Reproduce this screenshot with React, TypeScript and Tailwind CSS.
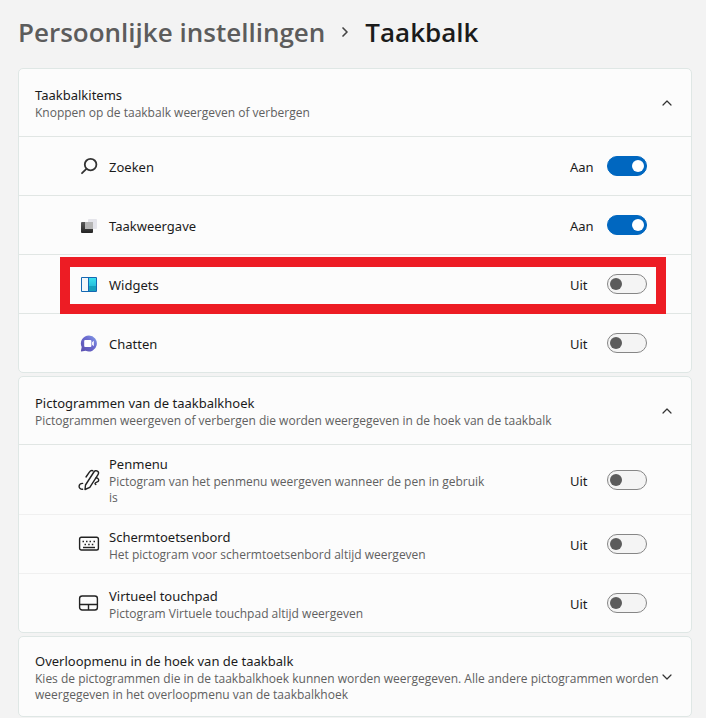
import { useState } from 'react';
import type { ReactNode } from 'react';
import { ChevronDown, ChevronRight, ChevronUp } from 'lucide-react';

type Item = {
  id: string;
  title: string;
  description?: string;
  icon: ReactNode;
  on?: boolean;
  highlighted?: boolean;
};

function SearchIcon() {
  return (
    <svg width="20" height="20" viewBox="0 -1 20 20" fill="none" stroke="#333" strokeWidth="1.8" strokeLinecap="round">
      <circle cx="11.6" cy="7.6" r="5.8" />
      <path d="M7.4 11.9 L3 16.2" />
    </svg>
  );
}

function TaskViewIcon() {
  return (
    <svg width="20" height="20" viewBox="0 -1 20 20">
      <defs>
        <linearGradient id="tv-dark" x1="0" y1="0" x2="0" y2="1">
          <stop offset="0" stopColor="#5a5a5a" />
          <stop offset="1" stopColor="#242424" />
        </linearGradient>
      </defs>
      <rect x="9" y="3" width="9" height="10" rx="1" fill="#e4e4ea" />
      <rect x="2" y="6" width="12" height="11" rx="1" fill="url(#tv-dark)" />
      <rect x="6" y="6" width="8" height="7" fill="#b5b5b5" />
    </svg>
  );
}

function WidgetsIcon() {
  return (
    <svg width="20" height="20" viewBox="0 -1 20 20">
      <defs>
        <linearGradient id="wd-teal" x1="0" y1="0" x2="0" y2="1">
          <stop offset="0" stopColor="#3be0ee" />
          <stop offset="1" stopColor="#27bfdc" />
        </linearGradient>
      </defs>
      <rect x="2" y="2" width="16" height="15" rx="1" fill="#1468b3" />
      <rect x="3" y="3" width="6" height="13" fill="#f2f6fb" />
      <rect x="10" y="3" width="7" height="8" fill="url(#wd-teal)" />
      <rect x="10" y="11" width="7" height="5" fill="#16a0bd" />
    </svg>
  );
}

function ChatIcon() {
  return (
    <svg width="20" height="20" viewBox="0 -1 20 20">
      <defs>
        <linearGradient id="ch-purple" x1="0" y1="1" x2="1" y2="0">
          <stop offset="0" stopColor="#5a4fae" />
          <stop offset="0.6" stopColor="#6c6cd0" />
          <stop offset="1" stopColor="#86a4ea" />
        </linearGradient>
      </defs>
      <path d="M10 1.500a8 8 0 1 1-3.400 15.300L2.400 17.500a.5.5 0 0 1-.5-.6l.8-3.800A8 8 0 0 1 10 1.500Z" fill="url(#ch-purple)" />
      <rect x="5.200" y="6" width="7.200" height="7" rx="1" fill="#fff" />
      <path d="M13.100 8.300l1.700-1.500v5.400l-1.700-1.500Z" fill="#fff" />
    </svg>
  );
}

function PenIcon() {
  return (
    <svg width="22" height="22" viewBox="0 0 22 22" fill="none" stroke="#222" strokeWidth="1.4" strokeLinecap="round" strokeLinejoin="round">
      <path d="M7 20.500l.5-4.500 8.400-13c.8-1.300 2.400-1.600 3.500-.9s1.400 2.200.600 3.500L11.800 18.300Z" />
      <path d="M14.800 1.700c-1.500-.4-2.600.2-3.400 1.400L8 8" />
      <path d="M4.600 14.400c-1.900 0-3.400 1.200-3.500 2.900-.1 1.900 1.500 3.100 3.500 3" />
      <path d="M18.200 8.800c1.800.4 2.800 1.600 2.400 2.900-.4 1.500-3 1.300-3.500 2.500-.2.600.1 1.200.7 1.300" />
    </svg>
  );
}

function KeyboardIcon() {
  return (
    <svg width="22" height="22" viewBox="0 0 22 22" fill="none" stroke="#222" strokeWidth="1.4">
      <rect x="1.600" y="4.200" width="18.800" height="12.800" rx="1.800" />
      <path d="M5 14.500H17" />
      <path d="M4.500 8.500H6M8 8.500h1.500M11.500 8.500H13M15.500 8.500H17M6.500 11.500H8M10.200 11.500h1.500M13.800 11.500h1.500" />
    </svg>
  );
}

function TouchpadIcon() {
  return (
    <svg width="22" height="22" viewBox="0 0 22 22" fill="none" stroke="#222" strokeWidth="1.4">
      <rect x="1.600" y="4" width="17.800" height="14" rx="2.500" />
      <path d="M1.600 12.500H19.400M10.500 12.500V18" />
    </svg>
  );
}

const taskbarItems: Item[] = [
  { id: 'search', title: 'Zoeken', icon: <SearchIcon />, on: true },
  { id: 'taskview', title: 'Taakweergave', icon: <TaskViewIcon />, on: true },
  { id: 'widgets', title: 'Widgets', icon: <WidgetsIcon />, highlighted: true },
  { id: 'chat', title: 'Chatten', icon: <ChatIcon /> },
];

const cornerItems: Item[] = [
  {
    id: 'pen',
    title: 'Penmenu',
    description: 'Pictogram van het penmenu weergeven wanneer de pen in gebruik is',
    icon: <PenIcon />,
  },
  {
    id: 'keyboard',
    title: 'Schermtoetsenbord',
    description: 'Het pictogram voor schermtoetsenbord altijd weergeven',
    icon: <KeyboardIcon />,
  },
  {
    id: 'touchpad',
    title: 'Virtueel touchpad',
    description: 'Pictogram Virtuele touchpad altijd weergeven',
    icon: <TouchpadIcon />,
  },
];

function Description({ text }: { text: string }) {
  return <span className="block font-['Open_Sans',sans-serif] text-[12px] leading-4 text-[#606060]">{text}</span>;
}

function SettingRow({ item }: { item: Item }) {
  const [on, setOn] = useState(Boolean(item.on));
  const divider = item.description ? 'border-[#f0f0f0]' : 'border-[#e1e6e4]';

  return (
    <div className={`relative flex min-h-[59px] items-center border-t pr-11 pl-[59px] first:border-[#e1e6e4] ${divider}`}>
      <span className="flex w-[22px] shrink-0 justify-center">{item.icon}</span>
      <label htmlFor={item.id} className="ml-[9px] max-w-[380px] pt-[9px] pb-2">
        <span className="block text-[13px] leading-5 text-[#1b1b1b]">{item.title}</span>
        {item.description && <Description text={item.description} />}
      </label>
      <span className="ml-auto w-[37px] shrink-0 pt-0.5 text-[13px] leading-5 text-[#1b1b1b]">{on ? 'Aan' : 'Uit'}</span>
      <input
        id={item.id}
        type="checkbox"
        role="switch"
        checked={on}
        onChange={(e) => setOn(e.target.checked)}
        className="flex h-5 w-10 shrink-0 appearance-none items-center rounded-full border border-[#868686] bg-[#f4f4f4] px-0.5 before:size-3 before:rounded-full before:bg-[#5c5c5c] checked:justify-end checked:border-[#0067c0] checked:bg-[#0067c0] checked:before:bg-white"
      />
      {/* rode markering */}
      {item.highlighted && (
        <div className="pointer-events-none absolute top-0.5 right-[25px] -bottom-px left-[41px] z-10 border-10 border-[#ed1c24]"></div>
      )}
    </div>
  );
}

type SectionProps = {
  title: string;
  description: string;
  items?: Item[];
};

function Section({ title, description, items }: SectionProps) {
  const [open, setOpen] = useState(Boolean(items));
  const Chevron = open ? ChevronUp : ChevronDown;

  return (
    <section className="rounded-[5px] border border-[#dfe7e5] bg-[#fcfcfc]">
      <button
        type="button"
        aria-expanded={open}
        onClick={() => setOpen(!open)}
        className="flex min-h-[67px] w-full items-center justify-between px-4 pt-3.5 pb-[13px] text-left"
      >
        <span>
          <span className="block text-[13px] leading-5 text-[#1b1b1b]">{title}</span>
          <Description text={description} />
        </span>
        <Chevron className="size-4 shrink-0 text-[#333]" strokeWidth={1.8} />
      </button>
      {open && items && (
        <div>
          {items.map((item) => (
            <SettingRow key={item.id} item={item} />
          ))}
        </div>
      )}
    </section>
  );
}

export default function App() {
  return (
    <div className="min-h-screen bg-[#f3f3f3] pr-3.5 pl-[18px] font-['Noto_Sans','Open_Sans',sans-serif]">
      {/* kruimelpad */}
      <nav className="flex h-[68px] items-center pb-1 font-['Open_Sans',sans-serif] text-[26px] leading-8 font-semibold">
        <a href="#" className="text-[#5c5c5c]">Persoonlijke instellingen</a>
        <ChevronRight className="mx-3 size-4 text-[#444]" strokeWidth={2.5} />
        <h1 className="text-[#1b1b1b]">Taakbalk</h1>
      </nav>

      <main className="flex flex-col gap-[3px]">
        <Section
          title="Taakbalkitems"
          description="Knoppen op de taakbalk weergeven of verbergen"
          items={taskbarItems}
        />
        <Section
          title="Pictogrammen van de taakbalkhoek"
          description="Pictogrammen weergeven of verbergen die worden weergegeven in de hoek van de taakbalk"
          items={cornerItems}
        />
        <Section
          title="Overloopmenu in de hoek van de taakbalk"
          description="Kies de pictogrammen die in de taakbalkhoek kunnen worden weergegeven. Alle andere pictogrammen worden weergegeven in het overloopmenu van de taakbalkhoek"
        />
      </main>
    </div>
  );
}
